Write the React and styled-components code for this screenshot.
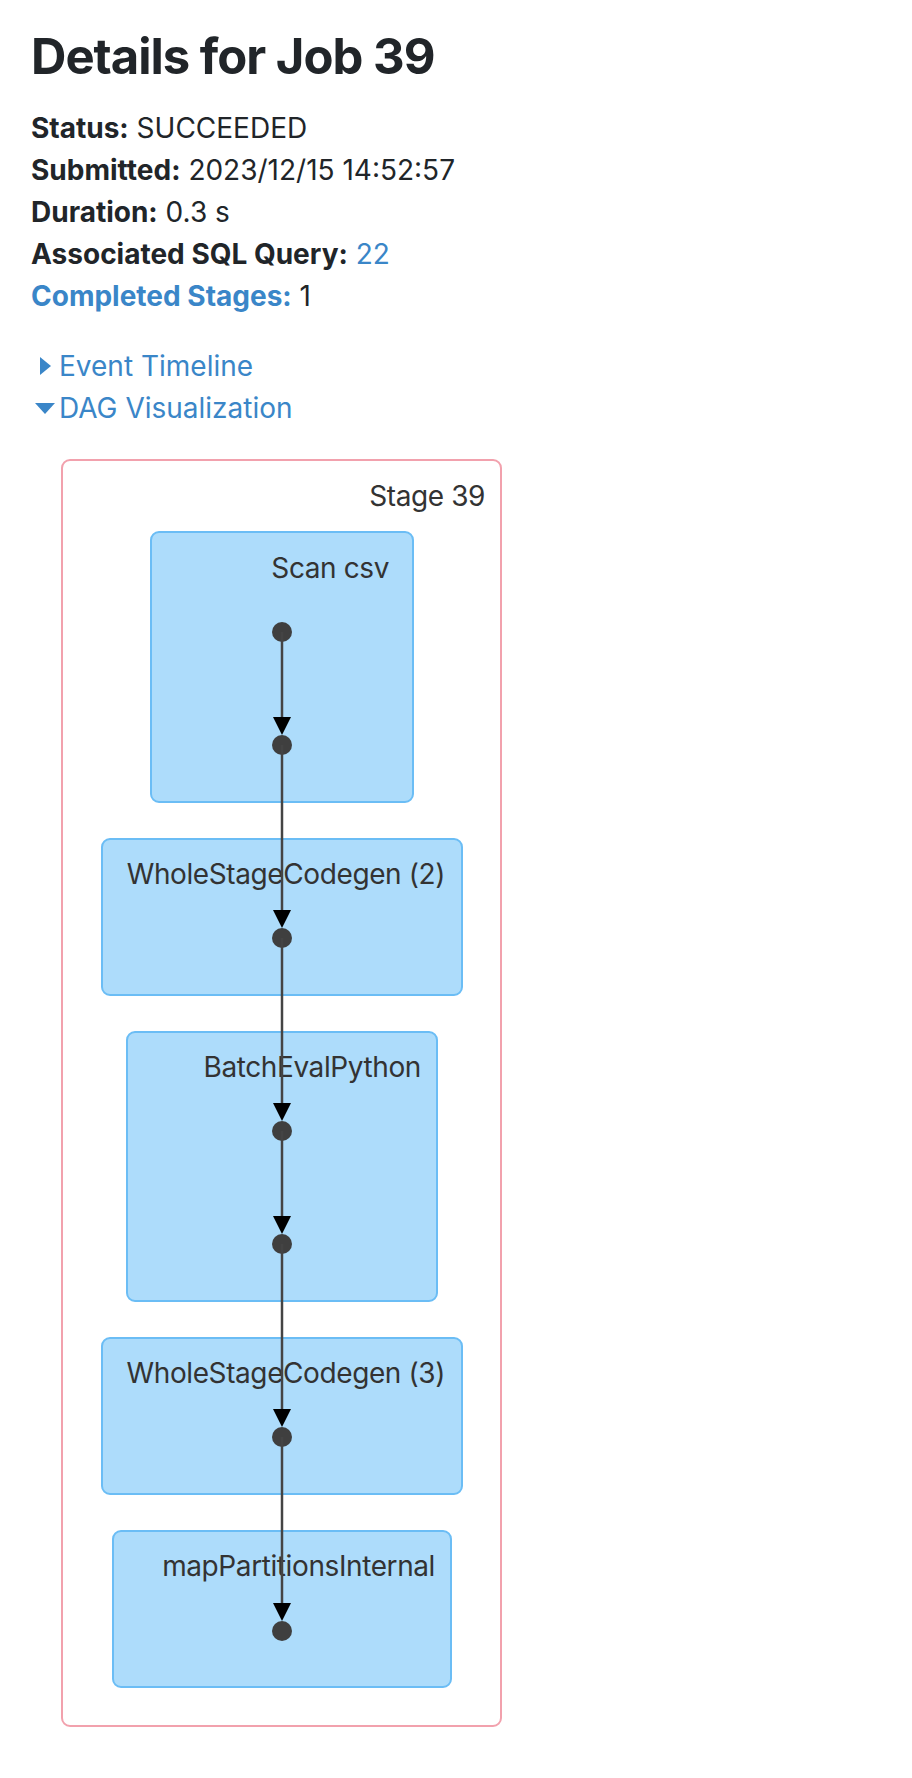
import React from 'react'
import styled, { createGlobalStyle } from 'styled-components'

const GlobalStyle = createGlobalStyle`
  body {
    margin: 0;
    background: #fff;
    font-family: Inter, 'Liberation Sans', Arial, sans-serif;
    color: #212529;
  }
`

const Page = styled.div`
  padding: 0 0 40px 31px;
`

const Title = styled.h3`
  margin: 0;
  padding-top: 28px;
  font-size: 49px;
  line-height: 1.2;
  font-weight: 700;
  letter-spacing: -1px;
  color: #212529;
`

const Summary = styled.ul`
  list-style: none;
  margin: 20px 0 0;
  padding: 0;
  font-size: 28px;
  line-height: 42px;
`

const Label = styled.strong`
  font-weight: 700;
  color: ${p => (p.link ? '#3a86c8' : '#212529')};
`

const Link = styled.a`
  color: #3a86c8;
  text-decoration: none;
`

const Toggles = styled.div`
  margin-top: 28px;
  font-size: 28px;
  line-height: 42px;
`

const Toggle = styled.div`
  display: flex;
  align-items: center;
  color: #3a86c8;
  cursor: pointer;
`

const Arrow = styled.span`
  display: inline-flex;
  justify-content: center;
  width: 28px;
  svg { display: block; }
`

const DagWrap = styled.div`
  margin-top: 29px;
  padding-left: 29px;
  svg { display: block; }
`

const DagText = styled.text`
  font-family: Inter, 'Liberation Sans', sans-serif;
  font-size: 28px;
  letter-spacing: -0.4px;
  fill: #333;
`

const nodes = [
  { label: 'Scan csv', x: 91, y: 74, w: 262, h: 270, tx: 329, ty: 120, dots: [174, 287] },
  { label: 'WholeStageCodegen (2)', x: 42, y: 381, w: 360, h: 156, tx: 385, ty: 426, dots: [480] },
  { label: 'BatchEvalPython', x: 67, y: 574, w: 310, h: 269, tx: 361, ty: 619, dots: [673, 786] },
  { label: 'WholeStageCodegen (3)', x: 42, y: 880, w: 360, h: 156, tx: 385, ty: 925, dots: [979] },
  { label: 'mapPartitionsInternal', x: 53, y: 1073, w: 338, h: 156, tx: 375, ty: 1118, dots: [1173] },
]

const CX = 222
const allDots = nodes.flatMap(n => n.dots)

function Dag() {
  return (
    <svg width="445" height="1272" viewBox="0 0 445 1272">
      <rect x="2" y="2" width="439" height="1266" rx="8" fill="#fff" stroke="#f2a1ad" strokeWidth="2" />
      <DagText x="425" y="48" textAnchor="end">Stage 39</DagText>
      {nodes.map(n => (
        <g key={n.label}>
          <rect x={n.x} y={n.y} width={n.w} height={n.h} rx="8" fill="#addcfb" stroke="#6bbdf5" strokeWidth="2" />
          <DagText x={n.tx} y={n.ty} textAnchor="end">{n.label}</DagText>
        </g>
      ))}
      {allDots.map(cy => (
        <circle key={cy} cx={CX} cy={cy} r="10" fill="#3f3f3f" />
      ))}
      {allDots.slice(1).map((cy, i) => (
        <g key={'e' + cy}>
          <line x1={CX} y1={allDots[i]} x2={CX} y2={cy - 18} stroke="#444" strokeWidth="2.5" />
          <polygon points={`${CX - 9},${cy - 28} ${CX + 9},${cy - 28} ${CX},${cy - 10}`} fill="#000" />
        </g>
      ))}
    </svg>
  )
}

export default function App() {
  return (
    <Page>
      <GlobalStyle />
      <Title>Details for Job 39</Title>
      <Summary>
        <li><Label>Status:</Label> SUCCEEDED</li>
        <li><Label>Submitted:</Label> 2023/12/15 14:52:57</li>
        <li><Label>Duration:</Label> 0.3 s</li>
        <li><Label>Associated SQL Query:</Label> <Link href="#">22</Link></li>
        <li><Label link>Completed Stages:</Label> 1</li>
      </Summary>
      <Toggles>
        <Toggle>
          <Arrow>
            <svg width="12" height="18" viewBox="0 0 12 18"><polygon points="1,0 12,9 1,18" fill="#3a86c8" /></svg>
          </Arrow>
          Event Timeline
        </Toggle>
        <Toggle>
          <Arrow>
            <svg width="20" height="12" viewBox="0 0 20 12"><polygon points="0,1 20,1 10,12" fill="#3a86c8" /></svg>
          </Arrow>
          DAG Visualization
        </Toggle>
      </Toggles>
      <DagWrap>
        <Dag />
      </DagWrap>
    </Page>
  )
}
